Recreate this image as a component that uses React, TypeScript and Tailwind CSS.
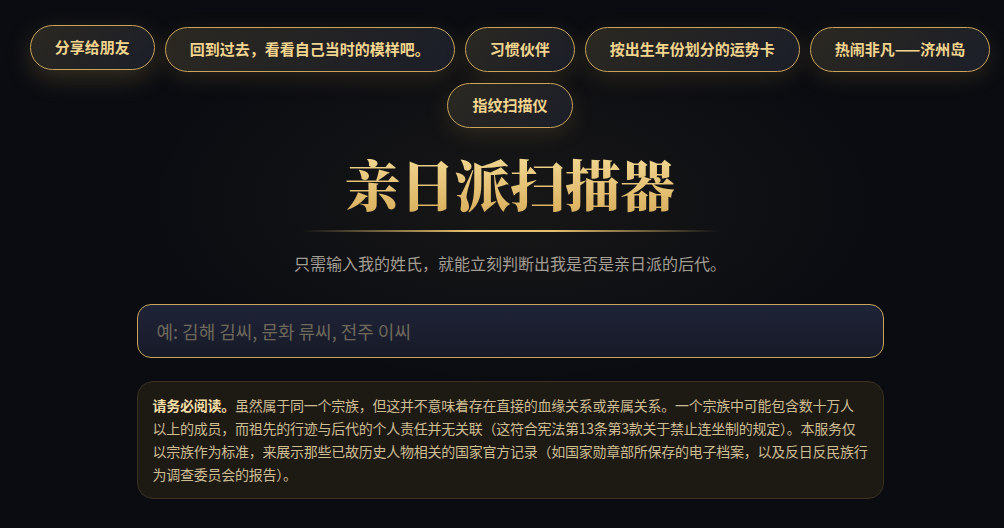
import { useState } from 'react';

const LINKS = [
  '分享给朋友',
  '回到过去，看看自己当时的模样吧。',
  '习惯伙伴',
  '按出生年份划分的运势卡',
  '热闹非凡——济州岛',
  '指纹扫描仪',
];

const sans = "font-['Noto_Sans_CJK_SC','Noto_Sans_CJK_KR',sans-serif]";

export default function App() {
  const [name, setName] = useState('');

  return (
    <div
      className={`min-h-[528px] w-full bg-[#0a0c11] bg-[radial-gradient(ellipse_520px_260px_at_51%_38%,rgba(200,170,100,0.07),transparent_70%)] pl-4 ${sans}`}
    >
      <div className="flex flex-wrap justify-center gap-x-[10px] gap-y-[11px] pt-[27px]">
        {LINKS.map((label, i) => (
          <button
            key={label}
            className={`h-[45px] rounded-full border border-[#c9a45a] bg-[linear-gradient(135deg,#2b2820,#1b1e29)] px-6 text-[15px] font-bold text-[#f1d58f] shadow-[0_6px_22px_rgba(201,164,90,0.16)] ${
              i === 0 ? '-translate-y-0.5 shadow-[0_8px_26px_rgba(201,164,90,0.24)]' : ''
            }`}
          >
            {label}
          </button>
        ))}
      </div>

      <div className="mt-[20px] flex flex-col items-center">
        <h1 className="bg-[linear-gradient(180deg,#f4dc98,#d9ad5a)] bg-clip-text font-['Noto_Serif_CJK_SC','Noto_Sans_CJK_SC',serif] text-[55px] font-black leading-[70px] text-transparent">
          亲日派扫描器
        </h1>
        <div className="mt-[12px] h-[2px] w-[417px] bg-[linear-gradient(90deg,transparent,#e6c170_40%,#e6c170_60%,transparent)]" />
        <p className="mt-[20px] text-[16px] leading-[22px] text-[#a39e94]">
          只需输入我的姓氏，就能立刻判断出我是否是亲日派的后代。
        </p>

        <input
          value={name}
          onChange={(e) => setName(e.target.value)}
          placeholder="예: 김해 김씨, 문화 류씨, 전주 이씨"
          className="mt-[30px] h-[54px] w-[747px] rounded-[14px] border border-[#c9a45a] bg-[linear-gradient(180deg,#1f2337,#171a27)] px-[19px] text-[18px] text-[#e8dcc0] outline-none placeholder:text-[#6e695b]"
        />

        <div className="mt-[23px] w-[747px] rounded-[16px] border border-[#3a3120] bg-[#1d1a13] px-[15px] py-3 text-[14px] leading-[23px] tracking-[-0.25px] whitespace-nowrap text-[#cdbd93]">
          <b className="text-[#f2dea6]">请务必阅读。</b>
          虽然属于同一个宗族，但这并不意味着存在直接的血缘关系或亲属关系。一个宗族中可能包含数十万人
          <br />
          以上的成员，而祖先的行迹与后代的个人责任并无关联（这符合宪法第13条第3款关于禁止连坐制的规定）。本服务仅
          <br />
          以宗族作为标准，来展示那些已故历史人物相关的国家官方记录（如国家勋章部所保存的电子档案，以及反日反民族行
          <br />
          为调查委员会的报告）。
        </div>
      </div>
    </div>
  );
}
